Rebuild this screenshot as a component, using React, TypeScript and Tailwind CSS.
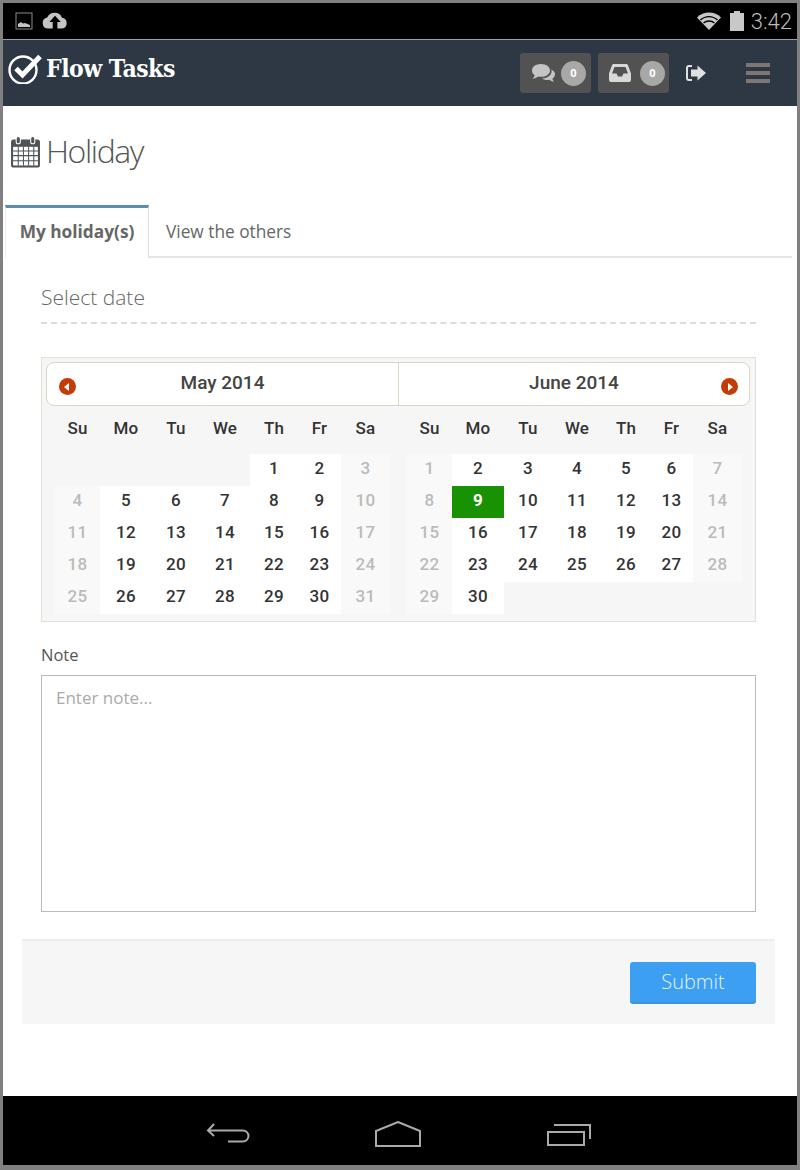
const COLUMNS = 'grid grid-cols-[45px_52px_48px_50px_48px_43px_49px]';
const DAY_NAMES = ['Su', 'Mo', 'Tu', 'We', 'Th', 'Fr', 'Sa'];

interface MonthProps {
  firstDay: number;
  lastDate: number;
  selected?: number;
  className?: string;
}

const Month = ({ firstDay, lastDate, selected, className = '' }: MonthProps) => {
  const cells: (number | null)[] = [];
  for (let i = 0; i < firstDay; i++) cells.push(null);
  for (let d = 1; d <= lastDate; d++) cells.push(d);

  return (
    <div className={className}>
      <div className={`${COLUMNS} h-[48px] items-center pb-[3px] text-center text-[17px] font-medium tracking-[0.2px] text-[#333]`}>
        {DAY_NAMES.map((name) => (
          <span key={name}>{name}</span>
        ))}
      </div>
      <div className={COLUMNS}>
        {cells.map((day, index) => {
          if (day === null) return <div key={`empty-${index}`} className="h-[32px]" />;
          const weekend = index % 7 === 0 || index % 7 === 6;
          if (day === selected) {
            return (
              <div key={day} className="flex h-[32px] items-center justify-center bg-[#189103] pb-[2px] text-[17px] font-bold text-white">
                {day}
              </div>
            );
          }
          return (
            <div
              key={day}
              className={`flex h-[32px] items-center justify-center pb-[2px] text-[17px] font-medium tracking-[0.4px] ${
                weekend ? 'bg-[#f9f9f9] text-[#bbb]' : 'bg-white text-[#333]'
              }`}
            >
              {day}
            </div>
          );
        })}
      </div>
    </div>
  );
};

const CheckLogo = () => (
  <svg width="35" height="30" viewBox="0 0 35 30" fill="none">
    <circle cx="15" cy="16" r="13.5" stroke="white" strokeWidth="2.4" />
    <path d="M8 14.5 L14.5 21 L32 2.5" stroke="white" strokeWidth="5" />
  </svg>
);

const CalendarIcon = () => (
  <svg width="31" height="34" viewBox="0 0 30 32">
    <rect x="1" y="4" width="28" height="27" rx="2.5" fill="#4d5356" />
    <rect x="3" y="11" width="24" height="18" fill="white" />
    <path
      d="M3 15h24M3 19.5h24M3 24.5h24M8 11v18M13 11v18M18 11v18M23 11v18"
      stroke="#4d5356"
      strokeWidth="1"
    />
    <rect x="6" y="1" width="4" height="7" rx="2" fill="#4d5356" stroke="white" strokeWidth="1" />
    <rect x="20" y="1" width="4" height="7" rx="2" fill="#4d5356" stroke="white" strokeWidth="1" />
  </svg>
);

const CommentsIcon = () => (
  <svg width="25" height="20" viewBox="0 0 25 20">
    <path d="M10 1c5.2 0 9 2.8 9 6.4s-3.800 6.400-9 6.400c-1 0-1.900-.1-2.800-.3C5.700 14.700 3.700 15.500 1.500 15.700c1-1 1.800-2.100 2.200-3.500C1.900 11 1 9.300 1 7.400 1 3.800 4.800 1 10 1z" fill="#c4c4c4" />
    <path d="M20.300 6.500c2.300 1 3.700 2.800 3.700 4.800 0 1.800-1 3.300-2.600 4.400.3 1.200 1 2.200 1.800 3-1.900-.2-3.600-.9-4.800-2-1 .3-2 .4-3 .3-1.700-.1-3.200-.6-4.400-1.400 5.500-.1 9.600-3.300 9.600-7.500 0-.2 0-.4-.3-1.600z" fill="#c4c4c4" />
  </svg>
);

const InboxIcon = () => (
  <svg width="22" height="18" viewBox="0 0 22 18">
    <path d="M4.500 0h13a1.500 1.500 0 0 1 1.400 1L22 9.500V16a2 2 0 0 1-2 2H2a2 2 0 0 1-2-2V9.500L3.100 1A1.500 1.500 0 0 1 4.500 0z" fill="#d8d8d8" />
    <path d="M5.500 3h11L19 9.500h-4.500L13 12.500H9L7.500 9.500H3z" fill="#525252" />
  </svg>
);

const App = () => {
  return (
    <div className="flex h-[1170px] w-[800px] flex-col border-x-3 border-t-3 border-b-[5px] border-[#808080] bg-white font-['Open_Sans',sans-serif]">
      {/* android status bar */}
      <div className="flex h-[36px] items-center bg-black pr-[5px] pl-[12px] text-[#bdbdbd]">
        <svg width="18" height="18" viewBox="0 0 18 18" className="mr-[9px]">
          <rect x="1" y="1" width="16" height="16" fill="none" stroke="#8a8a8a" strokeWidth="1" />
          <path d="M3 15v-3l3-2 2 1.500 2-.5 5 2v2z" fill="#c4c4c4" />
        </svg>
        <svg width="26" height="20" viewBox="0 0 26 20">
          <path
            d="M6 17.500a5.500 5.500 0 0 1-.8-10.900A8 8 0 0 1 20 6.800a5.400 5.400 0 0 1 0 10.700h-4.600V11h3.400L13 4.800 7.400 11h3.300v6.500z"
            fill="#c4c4c4"
          />
        </svg>
        <svg width="26" height="20" viewBox="0 0 26 20" className="ml-auto">
          <path d="M1 6.500a17 17 0 0 1 24 0L13 19z" fill="#c8c8c8" />
          <path d="M4.500 9a12.500 12.500 0 0 1 17 0M7.500 12a8.500 8.500 0 0 1 11 0" stroke="black" strokeWidth="1.400" fill="none" />
        </svg>
        <svg width="14" height="20" viewBox="0 0 14 20" className="ml-[8px]">
          <path d="M4 0h6v2h4v18H0V2h4z" fill="#c8c8c8" />
        </svg>
        <span className="ml-[7px] font-['Roboto',sans-serif] text-[22px] font-light">3:42</span>
      </div>

      {/* navbar */}
      <div className="flex h-[67px] items-center border-t border-[#9aa0a5] bg-[#2d3844]">
        <div className="mb-[8px] ml-[5px] flex items-center">
          <CheckLogo />
          <span className="ml-[3px] font-['DejaVu_Serif',serif] text-[24.5px] font-bold tracking-[-0.5px] text-white [font-stretch:condensed]">
            Flow Tasks
          </span>
        </div>
        <div className="ml-auto flex h-[40px] w-[71px] items-center rounded-[3px] bg-[#525252] pl-[11px]">
          <CommentsIcon />
          <span className="ml-[5px] flex size-[25px] items-center justify-center rounded-full bg-[#a8a8a8] text-[11px] font-bold text-white">0</span>
        </div>
        <div className="ml-[7px] flex h-[40px] w-[71px] items-center rounded-[3px] bg-[#525252] pl-[11px]">
          <InboxIcon />
          <span className="ml-[9px] flex size-[25px] items-center justify-center rounded-full bg-[#a8a8a8] text-[11px] font-bold text-white">0</span>
        </div>
        <svg width="22" height="18" viewBox="0 0 22 18" className="ml-[16px]">
          <path d="M7 2H4a2 2 0 0 0-2 2v10a2 2 0 0 0 2 2h3" stroke="#e0e0e0" strokeWidth="2" fill="none" />
          <path d="M6 5.500H12.500V1.500L21 9l-8.500 7.500V12.500H6z" fill="#e0e0e0" />
        </svg>
        <div className="mr-[27px] ml-[39px] flex w-[24px] flex-col gap-[4px]">
          <div className="h-[4px] bg-[#7d7672]" />
          <div className="h-[4px] bg-[#7d7672]" />
          <div className="h-[4px] bg-[#7d7672]" />
        </div>
      </div>

      {/* page content */}
      <div className="flex flex-1 flex-col">
        <div className="mt-[27px] ml-[7px] flex h-[38px] items-center">
          <CalendarIcon />
          <h1 className="-mt-[2px] ml-[5px] text-[32px] font-light tracking-[-1.4px] text-[#555]">Holiday</h1>
        </div>

        {/* tabs */}
        <div className="mt-[34px] mr-[5px] ml-[2px] flex h-[53px] border-b-2 border-[#e6e6e6]">
          <div className="-mb-[2px] flex h-[53px] w-[144px] items-center justify-center border-x border-t-3 border-x-[#dedede] border-t-[#5b8ea8] border-l-[#efefef] bg-white pb-[2px] text-[17.3px] font-bold text-[#666]">
            My holiday(s)
          </div>
          <div className="ml-[17px] flex items-center pt-[2px] text-[17.3px] text-[#666]">View the others</div>
        </div>

        <div className="mr-[41px] ml-[38px]">
          <div className="flex h-[66px] items-end border-b-2 border-dashed border-[#dcdcdc] pb-[11px] text-[21px] leading-[28px] font-light text-[#666]">
            Select date
          </div>

          {/* calendar */}
          <div className="mt-[33px] h-[265px] border border-[#e2e2d4] bg-[#f6f6f6] font-['Roboto',sans-serif]">
            <div className="mt-[4px] mr-[5px] ml-[4px] flex h-[44px] rounded-[8px] border border-[#d9d9c3] bg-white text-[19px] font-medium text-[#444]">
              <div className="relative flex w-[352px] justify-center border-r border-[#d9d9c3] pt-[7px]">
                <span className="leading-[26px]">May 2014</span>
                <span className="absolute top-[15px] left-[12px] flex size-[17px] items-center justify-center rounded-full bg-[#c33c05]">
                  <span className="mr-[2px] border-y-[4px] border-r-[5px] border-y-transparent border-r-white" />
                </span>
              </div>
              <div className="relative flex flex-1 justify-center pt-[7px]">
                <span className="leading-[26px]">June 2014</span>
                <span className="absolute top-[15px] right-[11px] flex size-[17px] items-center justify-center rounded-full bg-[#c33c05]">
                  <span className="ml-[2px] border-y-[4px] border-l-[5px] border-y-transparent border-l-white" />
                </span>
              </div>
            </div>
            <div className="flex pl-[13px]">
              <Month firstDay={4} lastDate={31} />
              <Month firstDay={0} lastDate={30} selected={9} className="ml-[17px]" />
            </div>
          </div>

          <div className="mt-[22px] text-[16.5px] leading-[22px] text-[#555]">Note</div>
          <div className="mt-[9px] h-[237px] border border-[#bbb] bg-white px-[14px] pt-[11px] text-[17px] leading-[22px] text-[#aaa]">
            Enter note...
          </div>
        </div>

        <div className="mt-[27px] mr-[22px] ml-[19px] flex h-[85px] items-start justify-end border-t-2 border-[#eeeeee] bg-[#f6f6f6] pt-[21px] pr-[19px]">
          <button className="h-[42px] w-[126px] rounded-[3px] border-b-2 border-[#3a94e0] bg-[#3c9ff2] text-[20px] font-light text-[#e4f1fd]">Submit</button>
        </div>
      </div>

      {/* android nav bar */}
      <div className="flex h-[69px] items-center justify-center bg-black pt-[6px] pr-[2px]">
        <svg width="44" height="26" viewBox="0 0 44 26" fill="none" stroke="#aaa" strokeWidth="2" className="mr-[125px]">
          <path d="M8 3 2 9.500 8 15M2 9.500h35a4.500 4.500 0 0 1 0 11H22" />
        </svg>
        <svg width="46" height="26" viewBox="0 0 46 26" fill="none" stroke="#aaa" strokeWidth="2" className="mr-[125px]">
          <path d="M1 10 23 1l22 9v15H1z" />
        </svg>
        <svg width="46" height="24" viewBox="0 0 46 24" fill="none" stroke="#aaa" strokeWidth="2">
          <path d="M2 10h36v13H2zM8 3h36v14" />
        </svg>
      </div>
    </div>
  );
};

export default App;
